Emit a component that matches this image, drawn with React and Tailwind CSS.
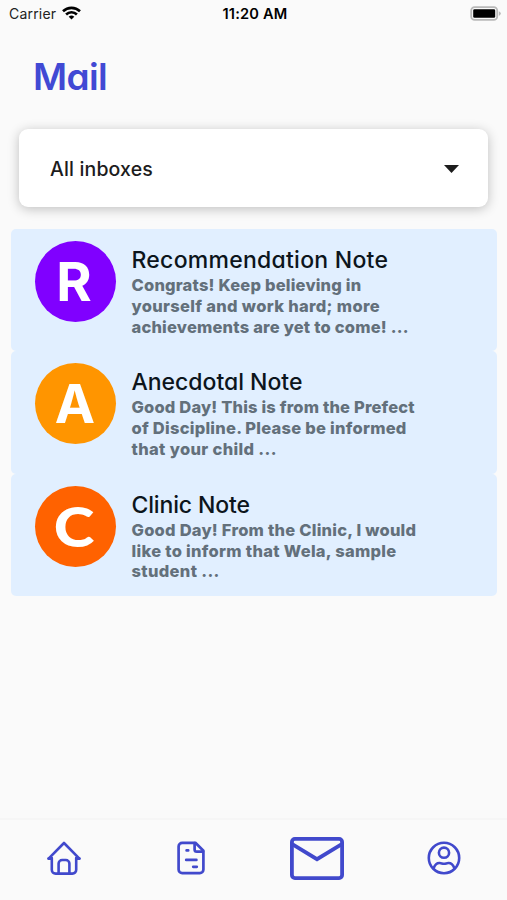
const notes = [
  {
    letter: "R",
    badge: "bg-[#8000ff] font-['Inter',sans-serif] font-bold text-[54px]",
    glyph: "-translate-x-px",
    title: "Recommendation Note",
    titleTrack: "tracking-[0.26px]",
    lines: [
      ["Congrats! Keep believing in", "tracking-[0.2px]"],
      ["yourself and work hard; more", "tracking-[0.31px]"],
      ["achievements are yet to come! ...", "tracking-[0.2px]"],
    ],
  },
  {
    letter: "A",
    badge: "bg-[#ff9500] font-['Inter',sans-serif] font-bold text-[54px]",
    glyph: "",
    title: "Anecdotal Note",
    titleTrack: "-tracking-[0.02px]",
    lines: [
      ["Good Day! This is from the Prefect", "tracking-[0.17px]"],
      ["of Discipline. Please be informed", "tracking-[0.25px]"],
      ["that your child ...", "tracking-[0.34px]"],
    ],
  },
  {
    letter: "C",
    badge: "bg-[#ff6200] font-['Lato',sans-serif] font-black text-[55px]",
    glyph: "scale-x-[1.12] -translate-x-px",
    title: "Clinic Note",
    titleTrack: "tracking-[-0.15px]",
    lines: [
      ["Good Day! From the Clinic, I would", "tracking-[0.23px]"],
      ["like to inform that Wela, sample", "tracking-[0.29px]"],
      ["student ...", "tracking-[0.34px]"],
    ],
  },
];

function StatusBar() {
  return (
    <div className="grid h-7 grid-cols-3 items-center pl-[9px] pr-[6px] text-black">
      <div className="flex items-center gap-[6px] pb-[2px]">
        <span className="text-[14px] tracking-[0.2px] text-[#222]">Carrier</span>
        <svg width="19" height="14" viewBox="0 0 19 14" fill="none" stroke="#000" strokeWidth="2.6">
          <path d="M1 5.3a12.2 12.2 0 0 1 17 0" />
          <path d="M4.1 8.5a7.7 7.7 0 0 1 10.8 0" />
          <path d="M9.5 13.5 6.7 10.8a4 4 0 0 1 5.6 0Z" fill="#000" stroke="none" />
        </svg>
      </div>
      <span className="pt-px text-center text-[14.6px] font-semibold tracking-[0.2px]">11:20 AM</span>
      <svg className="-mt-0.5 justify-self-end" width="31" height="15" viewBox="0 0 31 15">
        <rect x="1.2" y="1.2" width="26" height="12.6" rx="3.4" fill="#fafafa" stroke="#b9b9b9" strokeWidth="1.8" />
        <rect x="3.2" y="3.2" width="22" height="8.6" rx="1.3" fill="#000" />
        <path d="M28.8 5.2q2 .9 2 2.4t-2 2.4Z" fill="#b9b9b9" />
      </svg>
    </div>
  );
}

function Note({ note }) {
  return (
    <article className="flex h-[122.4px] gap-4 rounded-[5px] bg-[#e1efff] pl-6 pt-3">
      <div className={`flex size-[81px] shrink-0 items-center justify-center rounded-full leading-none text-white ${note.badge}`}>
        <span className={`block ${note.glyph}`}>{note.letter}</span>
      </div>
      <div className="pt-[4px]">
        <h2 className={`whitespace-nowrap text-[23px] font-medium leading-[30px] text-[#0c151c] [font-feature-settings:'cv11'] ${note.titleTrack}`}>
          {note.title}
        </h2>
        {note.lines.map(([text, track]) => (
          <p key={text} className={`whitespace-nowrap text-[16.5px] font-extrabold leading-[20.8px] text-[#63707b] ${track}`}>
            {text}
          </p>
        ))}
      </div>
    </article>
  );
}

function NavBar() {
  return (
    <nav className="grid h-[82px] grid-cols-4 items-center justify-items-center border-t-2 border-[#f6f6f6] pb-[4px]">
      <svg className="ml-[2px]" width="34" height="34" viewBox="0 0 34 34" fill="none" stroke="#4149cc" strokeWidth="2.6" strokeLinecap="round" strokeLinejoin="round">
        <path d="M1.6 17.6 17 2l15.400 15.600" />
        <path d="M4.800 17v11.800a3.800 3.800 0 0 0 3.800 3.800h16.800a3.800 3.800 0 0 0 3.800-3.800V17" />
        <path d="M1.600 17.600h3.200M29.200 17.600h3.200" />
        <path d="M11.600 32.300V22.600a3.600 3.600 0 0 1 3.600-3.600h3.600a3.600 3.600 0 0 1 3.600 3.600v9.700" />
      </svg>
      <svg className="ml-px" width="28" height="34" viewBox="0 0 28 34" fill="none" stroke="#4149cc" strokeWidth="2.7" strokeLinecap="round" strokeLinejoin="round">
        <path d="M18.400 1.800H5.200a3.600 3.600 0 0 0-3.600 3.600v23.200a3.600 3.600 0 0 0 3.600 3.600h17.600a3.600 3.600 0 0 0 3.600-3.600V9.800Z" />
        <path d="M17.600 2.200v6.200a2.200 2.200 0 0 0 2.200 2.200H26" />
        <path d="M9.600 9.400h1.600M9.200 18.900h10.200M16.200 25.800h3.600" />
      </svg>
      <svg width="54" height="43" viewBox="0 0 54 43" fill="none" stroke="#4149cc" strokeWidth="3.8" strokeLinejoin="round">
        <rect x="1.9" y="1.9" width="50.2" height="39.2" rx="3" />
        <path d="M2.200 7.200 27 22.200 51.800 7.200" strokeLinejoin="miter" />
      </svg>
      <svg width="34" height="34" viewBox="0 0 34 34" fill="none" stroke="#4149cc" strokeWidth="2.6" strokeLinecap="round">
        <circle cx="17" cy="17" r="15.2" />
        <circle cx="17" cy="11.700" r="5.100" />
        <path d="M6.800 26.800c1.200-3.200 3.400-5 6-4.800 1.600.1 2.600.8 4.200.8s2.600-.7 4.200-.8c2.600-.2 4.800 1.600 6 4.800" />
      </svg>
    </nav>
  );
}

export default function App() {
  return (
    <div className="flex h-[900px] w-[507px] flex-col overflow-hidden bg-[#fafafa] font-['Inter',sans-serif]">
      <StatusBar />
      <h1 className="pl-[33px] pt-[25px] text-[37px] font-semibold leading-[48px] tracking-[-0.6px] text-[#4149d4] [font-feature-settings:'cv11']">
        Mail
      </h1>
      <div className="mx-[19px] mt-7 flex h-[78px] items-center justify-between rounded-[9px] bg-white pl-[31px] pr-[29px] shadow-[0_2px_12px_rgba(0,0,0,0.24)]">
        <span className="pt-[3px] text-[19.5px] font-medium tracking-[0.15px] text-[#1c1c1c] [font-feature-settings:'cv11']">
          All inboxes
        </span>
        <svg className="mt-0.5" width="15" height="8" viewBox="0 0 15 8" fill="#1c1c1c">
          <path d="M0 0h15L7.500 8Z" />
        </svg>
      </div>
      <main className="mx-[10.5px] mt-[22px] flex-1">
        {notes.map((note) => (
          <Note key={note.letter} note={note} />
        ))}
      </main>
      <NavBar />
    </div>
  );
}
